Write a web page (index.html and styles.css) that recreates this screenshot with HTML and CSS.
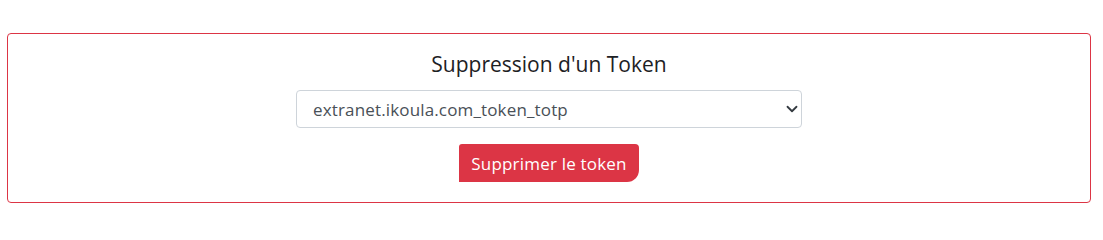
FILE: index.html
```html
<!DOCTYPE html>
<html lang="fr">
<head>
<meta charset="utf-8">
<title>Suppression d'un Token</title>
<link rel="stylesheet" href="styles.css">
</head>
<body>
<div class="page">
  <form class="card">
    <h4 class="title">Suppression d'un Token</h4>
    <div class="select-wrap">
      <select class="select">
        <option>extranet.ikoula.com_token_totp</option>
      </select>
      <svg class="chevron" width="12" height="12" viewBox="0 0 16 16"><path d="M2 5l6 6 6-6" fill="none" stroke="#343a40" stroke-width="2.4" stroke-linecap="round" stroke-linejoin="round"/></svg>
    </div>
    <button type="button" class="btn">Supprimer le token</button>
  </form>
</div>
</body>
</html>
```
FILE: styles.css
```css
* { box-sizing: border-box; }
html, body { margin: 0; padding: 0; background: #fff; }
body {
  font-family: "Open Sans", "Liberation Sans", sans-serif;
  color: #212529;
}
.page {
  padding: 33px 12px 0 7px;
}
.card {
  border: 1px solid #dc3545;
  border-radius: 4px;
  height: 170px;
  padding-top: 18px;
  display: flex;
  flex-direction: column;
  align-items: center;
}
.title {
  margin: 0 0 14px;
  font-size: 21px;
  font-weight: 400;
  line-height: 24px;
  height: 24px;
  color: #1d2124;
}
.select-wrap {
  position: relative;
  width: 506px;
  height: 38px;
}
.select {
  appearance: none;
  -webkit-appearance: none;
  width: 100%;
  height: 38px;
  border: 1px solid #ced4da;
  border-radius: 4px;
  background: #fff;
  padding: 0 30px 0 16px;
  font-family: inherit;
  font-size: 17px;
  letter-spacing: 0.15px;
  color: #495057;
  outline: none;
}
.chevron {
  position: absolute;
  right: 4px;
  top: 13px;
  pointer-events: none;
}
.btn {
  margin-top: 16px;
  width: 180px;
  height: 38px;
  border: none;
  background: #dc3545;
  color: #fff;
  font-family: inherit;
  font-size: 17px;
  letter-spacing: 0.2px;
  border-radius: 3px 4px 12px 0;
  padding: 0;
}
```
